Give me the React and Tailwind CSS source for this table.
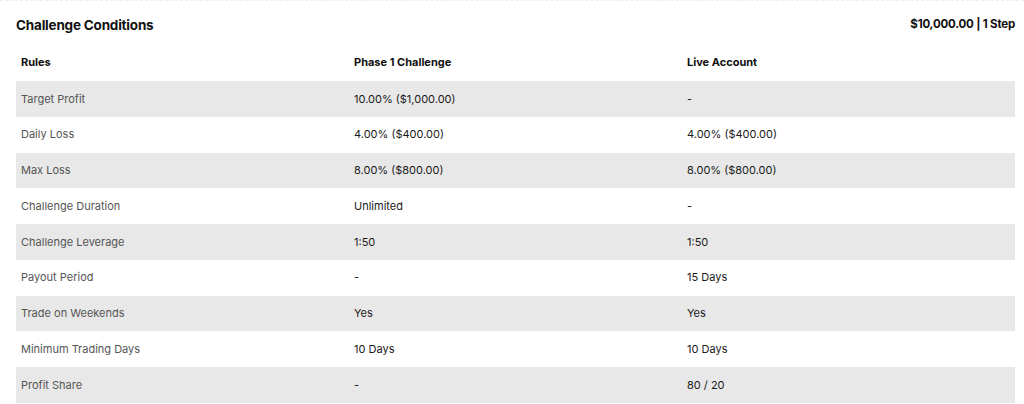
import React from 'react';

const rows = [
  { rule: 'Target Profit', phase: '10.00% ($1,000.00)', live: '-' },
  { rule: 'Daily Loss', phase: '4.00% ($400.00)', live: '4.00% ($400.00)' },
  { rule: 'Max Loss', phase: '8.00% ($800.00)', live: '8.00% ($800.00)' },
  { rule: 'Challenge Duration', phase: 'Unlimited', live: '-' },
  { rule: 'Challenge Leverage', phase: '1:50', live: '1:50' },
  { rule: 'Payout Period', phase: '-', live: '15 Days' },
  { rule: 'Trade on Weekends', phase: 'Yes', live: 'Yes' },
  { rule: 'Minimum Trading Days', phase: '10 Days', live: '10 Days' },
  { rule: 'Profit Share', phase: '-', live: '80 / 20' },
];

const App = () => {
  return (
    <div className="w-[1024px] h-[404px] overflow-hidden bg-white border-t border-dashed border-[#e6f0f7] font-['Inter','Noto_Sans',sans-serif]">
      <div className="pl-4 pr-[9px]">
        {/* Header */}
        <div className="flex items-center justify-between h-[49px] pb-[1px]">
          <h2 className="text-[13.5px] font-bold text-[#111] tracking-[-0.2px]">Challenge Conditions</h2>
          <span className="text-[11.5px] font-bold text-[#111] tracking-[-0.2px]">$10,000.00 | 1 Step</span>
        </div>

        {/* Table */}
        <table className="w-[999px] table-fixed border-collapse text-[11px]">
          <thead>
            <tr className="h-[31px]">
              <th className="text-left font-bold text-[#111] pl-[5px] pb-[7px]">Rules</th>
              <th className="text-left font-bold text-[#111] pl-[5px] pb-[7px]">Phase 1 Challenge</th>
              <th className="text-left font-bold text-[#111] pl-[5px] pb-[7px]">Live Account</th>
            </tr>
          </thead>
          <tbody>
            {rows.map((r, i) => (
              <tr key={r.rule} className={`h-[35.75px] ${i % 2 === 0 ? 'bg-[#e8e8e8]' : 'bg-white'}`}>
                <td className="pl-[5px] text-[#555]">{r.rule}</td>
                <td className="pl-[5px] text-[#1a1a1a]">{r.phase}</td>
                <td className="pl-[5px] text-[#1a1a1a]">{r.live}</td>
              </tr>
            ))}
          </tbody>
        </table>
      </div>
    </div>
  );
};

export default App;
